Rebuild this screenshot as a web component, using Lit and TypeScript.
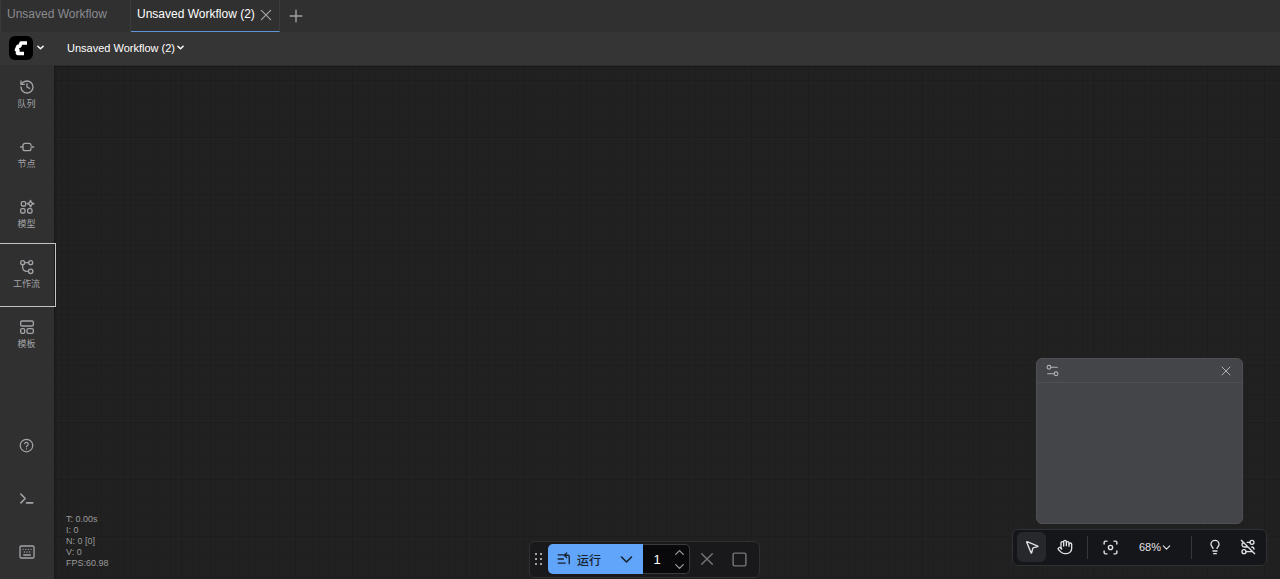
import { LitElement, html, css, svg, TemplateResult, SVGTemplateResult } from "lit";
import { customElement, property, state } from "lit/decorators.js";
import { classMap } from "lit/directives/class-map.js";

const glyphs: Record<string, SVGTemplateResult> = {
  history: svg`<path d="M3 12a9 9 0 1 0 9-9 9.750 9.750 0 0 0-6.740 2.740L3 8"/><path d="M3 3v5h5"/><path d="M12 7v5l4 2"/>`,
  node: svg`<path d="M2.500 12H6M18 12h4M18 9.500a3 3 0 0 0-3-3H9a3 3 0 0 0-3 3v5a3 3 0 0 0 3 3h6a3 3 0 0 0 3-3"/>`,
  model: svg`<rect x="3.500" y="4" width="6.500" height="6.500" rx="2"/><rect x="2.500" y="14.500" width="6.500" height="6.500" rx="2"/><rect x="13" y="14.500" width="6.500" height="6.500" rx="2"/><path d="M17.300 2 18.800 5.500 22.300 7l-3.500 1.500-1.500 3.500-1.500-3.500L12.300 7l3.500-1.500z"/>`,
  workflow: svg`<circle cx="5.500" cy="5.500" r="3"/><circle cx="17.500" cy="5.500" r="3"/><circle cx="17.500" cy="18.500" r="3.300"/><path d="M8.500 5.500h6M5.500 8.500v4a6 6 0 0 0 6 6h2.500"/>`,
  template: svg`<rect x="2.500" y="3" width="19" height="7.500" rx="2"/><rect x="2.500" y="14.500" width="6" height="7" rx="2"/><rect x="12" y="14.500" width="9.500" height="7" rx="2"/>`,
  help: svg`<circle cx="12" cy="12" r="10"/><path d="M9 9a3 3 0 0 1 5.800 1c0 2-2.900 2.600-2.900 4M12 17.300v.2"/>`,
  terminal: svg`<path d="m3 5 7 7-7 7M12 19h10"/>`,
  keyboard: svg`<rect x="1.500" y="3" width="21" height="18" rx="2"/><path d="M6 8h.1M10 8h.1M14 8h.1M18 8h.1M8 12h.1M12 12h.1M16 12h.1M7 16.500h10"/>`,
  down: svg`<path d="m5 8.500 7 7 7-7"/>`,
  up: svg`<path d="m5 15.500 7-7 7 7"/>`,
  close: svg`<path d="M4 4l16 16M20 4 4 20"/>`,
  plus: svg`<path d="M12 2v20M2 12h20"/>`,
  stop: svg`<rect x="3" y="3" width="18" height="18" rx="2"/>`,
  run: svg`<path d="M2 5h9M2 12h9M2 19h12M13 5.500h6a2 2 0 0 1 2 2V20M16.500 1.500l-4 4 4 4"/>`,
  cursor: svg`<path d="M4.037 4.688a.495.495 0 0 1 .651-.651l16 6.500a.5.5 0 0 1-.063.947l-6.124 1.580a2 2 0 0 0-1.438 1.435l-1.579 6.126a.5.5 0 0 1-.947.063z"/>`,
  hand: svg`<path d="M18 11V6a2 2 0 0 0-4 0M14 10V4a2 2 0 0 0-4 0v2M10 10.500V6a2 2 0 0 0-4 0v8"/><path d="M18 8a2 2 0 1 1 4 0v6a8 8 0 0 1-8 8h-2c-2.800 0-4.500-.860-5.990-2.340l-3.600-3.600a2 2 0 0 1 2.830-2.820L7 15"/>`,
  focus: svg`<circle cx="12" cy="12" r="3"/><path d="M3 7V5a2 2 0 0 1 2-2h2M17 3h2a2 2 0 0 1 2 2v2M21 17v2a2 2 0 0 1-2 2h-2M7 21H5a2 2 0 0 1-2-2v-2"/>`,
  bulb: svg`<path d="M15 14c.200-1 .700-1.700 1.500-2.500 1-.900 1.500-2.200 1.500-3.500A6 6 0 0 0 6 8c0 1 .200 2.200 1.500 3.500.700.700 1.300 1.500 1.500 2.500M9 18h6M10 22h4"/>`,
  linksOff: svg`<circle cx="6" cy="19" r="3"/><path d="M9 19h8.500c.4 0 .9-.1 1.300-.2M5.200 5.200A3.500 3.530 0 0 0 6.500 12H12M2 2l20 20M21 15.300a3.500 3.500 0 0 0-3.300-3.300M15 5h-4.300"/><circle cx="18" cy="5" r="3"/>`,
  sliders: svg`<circle cx="5.500" cy="6" r="3.500"/><circle cx="18.500" cy="18" r="3.500"/><path d="M9 6h12M3 18h12"/>`,
};

@customElement("ui-icon")
class UiIcon extends LitElement {
  @property() name = "";
  @property({ type: Number }) size = 16;
  @property({ type: Number }) weight = 2;

  static styles = css`
    :host { display: inline-flex; flex: none; }
    svg { display: block; fill: none; stroke: currentColor; stroke-linecap: round; stroke-linejoin: round; }
  `;

  render() {
    return html`<svg viewBox="0 0 24 24" width=${this.size} height=${this.size} stroke-width=${this.weight} aria-hidden="true">${glyphs[this.name]}</svg>`;
  }
}

const icon = (name: string, size = 16, weight = 2): TemplateResult =>
  html`<ui-icon name=${name} .size=${size} .weight=${weight}></ui-icon>`;

const controls = css`
  * { box-sizing: border-box; }
  button, input { font: inherit; color: inherit; background: none; border: 0; padding: 0; margin: 0; }
  button { display: flex; align-items: center; justify-content: center; cursor: pointer; white-space: nowrap; }
`;

@customElement("workflow-header")
class WorkflowHeader extends LitElement {
  static styles = [controls, css`
    :host { display: block; color: #fff; }
    .tabs { display: flex; height: 32px; background: #303030; border-left: 1px solid #3a3a3a; }
    .tab { display: flex; align-items: flex-start; font-size: 12px; border-right: 1px solid #3c3c3c; }
    .tab button { height: 28px; }
    .tab .name { padding: 0 6px; }
    .idle { width: 130px; color: #8b8b90; }
    .active { border-bottom: 1px solid #6094d8; }
    .active .name { padding-right: 4px; }
    .active .dismiss { width: 14px; margin-right: 6px; color: #a5a5aa; height: 30px; }
    .add { width: 32px; color: #a0a0a5; }
    .menu { display: flex; align-items: center; height: 34px; padding: 0 9px 2px; background: #353535; border-bottom: 1px solid #2b2b2b; font-size: 11px; }
    .brand { gap: 3px; }
    .logo { display: block; width: 24px; height: 24px; }
    .title { gap: 1px; margin-left: 22px; }
  `];

  render() {
    return html`
      <nav class="tabs" aria-label="Workflows">
        <div class="tab idle"><button class="name">Unsaved Workflow</button></div>
        <div class="tab active">
          <button class="name">Unsaved Workflow (2)</button>
          <button class="dismiss" aria-label="Close">${icon("close", 14, 2)}</button>
        </div>
        <button class="add" aria-label="New workflow">${icon("plus", 14, 2.5)}</button>
      </nav>
      <div class="menu">
        <button class="brand" aria-label="Menu">
          <svg class="logo" viewBox="0 0 24 24" aria-hidden="true">
            <rect width="24" height="24" rx="6" fill="#000"/>
            <path d="M18 7H12L10.800 10.200H9L7.400 14H9L8.400 17.400H15" fill="none" stroke="#fff" stroke-width="3.500" stroke-linejoin="round"/>
          </svg>
          ${icon("down", 9, 4)}
        </button>
        <button class="title">Unsaved Workflow (2) ${icon("down", 9, 4)}</button>
      </div>
    `;
  }
}

@customElement("side-bar")
class SideBar extends LitElement {
  @state() private focused = "工作流";

  private items = [
    { name: "history", label: "队列" },
    { name: "node", label: "节点" },
    { name: "model", label: "模型" },
    { name: "workflow", label: "工作流" },
    { name: "template", label: "模板" },
  ];

  static styles = [controls, css`
    :host { display: flex; flex-direction: column; justify-content: space-between; width: 54px; box-sizing: border-box; background: #303030; color: #a3a3a8; }
    .group { display: flex; flex-direction: column; }
    .item { width: 100%; height: 60px; padding: 0 1px 2px 0; flex-direction: column; gap: 3px; font-size: 9px; line-height: 12px; }
    .focused { outline: 1px solid #c4c4c4; outline-offset: 1px; }
    .small { height: 53px; }
  `];

  render() {
    return html`
      <div class="group">
        ${this.items.map((i) => html`
          <button class=${classMap({ item: true, focused: i.label === this.focused })}
            @click=${() => (this.focused = i.label)}>${icon(i.name, 16)}<span>${i.label}</span></button>`)}
      </div>
      <div class="group">
        <button class="item small" aria-label="Help">${icon("help", 15)}</button>
        <button class="item small" aria-label="Console">${icon("terminal", 15, 2.5)}</button>
        <button class="item small" aria-label="Shortcuts">${icon("keyboard", 16, 2)}</button>
      </div>
    `;
  }
}

@customElement("run-bar")
class RunBar extends LitElement {
  @state() private count = 1;

  static styles = [controls, css`
    :host { display: flex; align-items: center; width: 231px; height: 37px; box-sizing: border-box; padding: 0 0 1px 5px; border: 1px solid #303033; border-radius: 6px; background: #19191b; color: #77777b; }
    .grip { display: grid; grid-template-columns: 2px 2px; gap: 3px; width: 13px; }
    .grip i { width: 2px; height: 2px; background: #a2a2a5; }
    .run, .more { height: 30px; background: #60a5fa; color: #17212e; }
    .run { width: 62px; gap: 6px; font-size: 12px; font-weight: 500; border-radius: 5px 0 0 5px; }
    .more { width: 33px; }
    .batch { display: flex; width: 47px; height: 30px; background: #09090b; border: 1px solid #3b3b3f; border-left: 0; border-radius: 0 5px 5px 0; }
    .batch input { width: 28px; color: #fff; font-size: 13px; text-align: center; }
    .steps { display: flex; flex-direction: column; width: 16px; color: #97979b; }
    .steps button { height: 14px; }
    .action { width: 33px; height: 30px; }
  `];

  render() {
    return html`
      <span class="grip">${Array.from({ length: 6 }, () => html`<i></i>`)}</span>
      <button class="run">${icon("run", 14, 2.3)}<span>运行</span></button>
      <button class="more" aria-label="Run options">${icon("down", 17, 2.3)}</button>
      <div class="batch">
        <input aria-label="Batch count" inputmode="numeric" .value=${String(this.count)} />
        <span class="steps">
          <button aria-label="Increase" @click=${() => this.count++}>${icon("up", 13, 2.5)}</button>
          <button aria-label="Decrease" @click=${() => (this.count = Math.max(1, this.count - 1))}>${icon("down", 13, 2.5)}</button>
        </span>
      </div>
      <button class="action" aria-label="Cancel">${icon("close", 16)}</button>
      <button class="action" aria-label="Stop">${icon("stop", 17)}</button>
    `;
  }
}

@customElement("canvas-tools")
class CanvasTools extends LitElement {
  static styles = [controls, css`
    :host { display: flex; align-items: center; gap: 8px; height: 37px; box-sizing: border-box; padding: 0 4px 1px; border: 1px solid #303035; border-radius: 6px; background: #15161a; color: #e2e2e4; }
    .group { display: flex; align-items: center; gap: 4px; }
    .tool { width: 29px; height: 30px; border-radius: 6px; }
    .on { background: #27282b; }
    .zoom { width: 54px; height: 30px; padding-right: 1px; font-size: 11px; }
    .rule { width: 1px; height: 23px; background: #36363b; }
  `];

  render() {
    return html`
      <div class="group">
        <button class="tool on" aria-label="Select">${icon("cursor", 16)}</button>
        <button class="tool" aria-label="Pan">${icon("hand", 16)}</button>
      </div>
      <span class="rule"></span>
      <div class="group">
        <button class="tool" aria-label="Fit view">${icon("focus", 17)}</button>
        <button class="zoom">68% ${icon("down", 11, 2.5)}</button>
      </div>
      <span class="rule"></span>
      <div class="group">
        <button class="tool" aria-label="Minimap">${icon("bulb", 16)}</button>
        <button class="tool" aria-label="Hide links">${icon("linksOff", 16)}</button>
      </div>
    `;
  }
}

@customElement("graph-canvas")
class GraphCanvas extends LitElement {
  private minor = [6, 11, 17, 23, 29, 34, 40, 46, 51];

  static styles = [controls, css`
    :host { display: block; position: relative; overflow: hidden; background: #212121; }
    .grid { display: block; position: absolute; inset: 0; width: 100%; height: 100%; }
    .shade { position: absolute; inset: 0; box-shadow: inset 1px 1px 2px #181818; }
    .stats { position: absolute; left: 12px; bottom: 10px; margin: 0; color: #9a9a9a; font-size: 9px; line-height: 11px; }
    .stats p { margin: 0; }
    .run { position: absolute; left: 475px; bottom: 1px; }
    .tools { position: absolute; right: 13px; bottom: 13px; }
    .map { position: absolute; right: 37px; bottom: 55px; width: 207px; height: 166px; border: 1px solid #4f5053; border-radius: 6px; background: #444548; color: #b2b2b5; }
    .bar { display: flex; align-items: center; justify-content: space-between; height: 24px; padding: 0 10px 0 9px; border-bottom: 1px solid #4f5054; }
  `];

  render() {
    return html`
      <svg class="grid" aria-hidden="true">
        <defs>
          <pattern id="cells" x="13" y="14" width="57" height="57" patternUnits="userSpaceOnUse">
            ${this.minor.map((p) => svg`<path d="M${p} 0h1v57h-1zM0 ${p}h57v1h-57z" fill="#1f1f1f"/>`)}
            <path d="M0 0h57v1H1v56H0z" fill="#1d1d1d"/>
          </pattern>
        </defs>
        <rect width="100%" height="100%" fill="url(#cells)"/>
      </svg>
      <div class="shade"></div>
      <div class="stats"><p>T: 0.00s</p><p>I: 0</p><p>N: 0 [0]</p><p>V: 0</p><p>FPS:60.98</p></div>
      <section class="map" aria-label="Minimap">
        <div class="bar">
          <button aria-label="Minimap settings">${icon("sliders", 13)}</button>
          <button aria-label="Close minimap">${icon("close", 12)}</button>
        </div>
      </section>
      <canvas-tools class="tools"></canvas-tools>
      <run-bar class="run"></run-bar>
    `;
  }
}

@customElement("app-root")
class AppRoot extends LitElement {
  static styles = css`
    :host { display: grid; grid-template-rows: auto 1fr; height: 100vh; font-family: "Liberation Sans", "Noto Sans CJK SC", sans-serif; background: #212121; }
    .body { display: grid; grid-template-columns: auto 1fr; min-height: 0; }
    side-bar { position: relative; z-index: 1; margin-top: -1px; }
  `;

  render() {
    return html`
      <workflow-header></workflow-header>
      <main class="body">
        <side-bar></side-bar>
        <graph-canvas></graph-canvas>
      </main>
    `;
  }
}
